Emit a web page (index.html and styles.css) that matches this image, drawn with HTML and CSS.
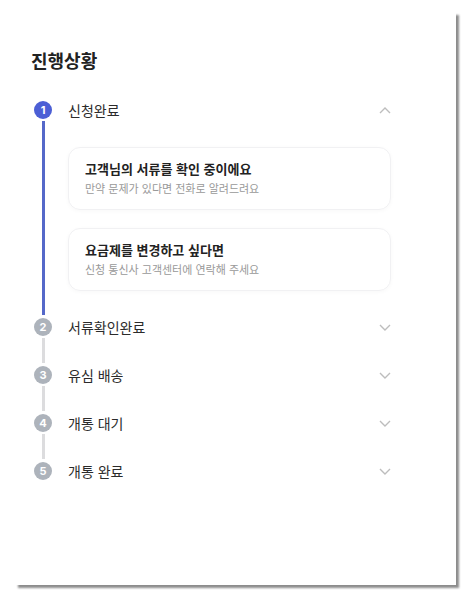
FILE: index.html
```html
<!DOCTYPE html>
<html lang="ko">
<head>
<meta charset="utf-8">
<link rel="stylesheet" href="styles.css">
</head>
<body>
<div class="panel">
  <h2 class="title">진행상황</h2>
  <ol class="steps">
    <li class="step active">
      <div class="rail"><span class="dot">1</span><span class="line"></span></div>
      <div class="content">
        <div class="head">
          <span class="label">신청완료</span>
          <svg class="chev" width="12" height="7" viewBox="0 0 12 7"><polyline points="1,6 6,1 11,6" fill="none" stroke="#bdbdbd" stroke-width="1.4"/></svg>
        </div>
        <div class="details">
          <div class="info">
            <div class="info-title">고객님의 서류를 확인 중이에요</div>
            <div class="info-sub">만약 문제가 있다면 전화로 알려드려요</div>
          </div>
          <div class="info">
            <div class="info-title">요금제를 변경하고 싶다면</div>
            <div class="info-sub">신청 통신사 고객센터에 연락해 주세요</div>
          </div>
        </div>
      </div>
    </li>
    <li class="step">
      <div class="rail"><span class="dot">2</span><span class="line"></span></div>
      <div class="content">
        <div class="head">
          <span class="label">서류확인완료</span>
          <svg class="chev" width="12" height="7" viewBox="0 0 12 7"><polyline points="1,1 6,6 11,1" fill="none" stroke="#bdbdbd" stroke-width="1.4"/></svg>
        </div>
      </div>
    </li>
    <li class="step">
      <div class="rail"><span class="dot">3</span><span class="line"></span></div>
      <div class="content">
        <div class="head">
          <span class="label">유심 배송</span>
          <svg class="chev" width="12" height="7" viewBox="0 0 12 7"><polyline points="1,1 6,6 11,1" fill="none" stroke="#bdbdbd" stroke-width="1.4"/></svg>
        </div>
      </div>
    </li>
    <li class="step">
      <div class="rail"><span class="dot">4</span><span class="line"></span></div>
      <div class="content">
        <div class="head">
          <span class="label">개통 대기</span>
          <svg class="chev" width="12" height="7" viewBox="0 0 12 7"><polyline points="1,1 6,6 11,1" fill="none" stroke="#bdbdbd" stroke-width="1.4"/></svg>
        </div>
      </div>
    </li>
    <li class="step">
      <div class="rail"><span class="dot">5</span></div>
      <div class="content">
        <div class="head">
          <span class="label">개통 완료</span>
          <svg class="chev" width="12" height="7" viewBox="0 0 12 7"><polyline points="1,1 6,6 11,1" fill="none" stroke="#bdbdbd" stroke-width="1.4"/></svg>
        </div>
      </div>
    </li>
  </ol>
</div>
</body>
</html>
```

FILE: styles.css
```css
* { box-sizing: border-box; }
html, body {
  margin: 0;
  padding: 0;
  background: #ffffff;
  overflow: hidden;
}
html { width: 473px; height: 603px; }
body {
  width: 473px;
  height: 603px;
  font-family: "Noto Sans CJK KR", "Noto Sans", sans-serif;
  color: #333;
  padding: 12px 0 0 15px;
}
.panel {
  width: 441px;
  height: 573px;
  background: #fff;
  box-shadow: 3px 3px 2px rgba(0, 0, 0, 0.45);
  padding: 36px 65px 0 16px;
}
.title {
  margin: 0;
  font-size: 18px;
  line-height: 24px;
  font-weight: 700;
  color: #222;
}
.steps {
  list-style: none;
  margin: 26px 0 0 0;
  padding: 0;
}
.step {
  display: flex;
  gap: 16px;
}
.rail {
  width: 18px;
  margin-left: 3px;
  display: flex;
  flex-direction: column;
  align-items: center;
}
.dot {
  width: 18px;
  height: 18px;
  margin-top: 3px;
  border-radius: 50%;
  background: #adb3bb;
  color: #fff;
  font-size: 11px;
  font-weight: 700;
  line-height: 18px;
  text-align: center;
  font-family: "Inter", "Noto Sans", sans-serif;
}
.line {
  flex: 1;
  width: 3px;
  margin-top: 2px;
  background: #dcdcde;
}
.active .dot { background: #4c5fd5; }
.active .line { background: #5568c9; }
.content {
  flex: 1;
  padding-bottom: 24px;
}
.head {
  height: 24px;
  display: flex;
  align-items: center;
  justify-content: space-between;
}
.label {
  font-size: 14px;
  color: #2b2b2b;
}
.chev { display: block; }
.details {
  margin-top: 25px;
  display: flex;
  flex-direction: column;
  gap: 18px;
}
.info {
  border: 1px solid #f1f1f3;
  border-radius: 12px;
  padding: 12px 16px 13px;
  box-shadow: 0 1px 4px rgba(0, 0, 0, 0.03);
}
.info-title {
  font-size: 13px;
  line-height: 18px;
  font-weight: 700;
  color: #222;
}
.info-sub {
  margin-top: 2px;
  font-size: 11px;
  line-height: 16px;
  color: #999;
}
```
